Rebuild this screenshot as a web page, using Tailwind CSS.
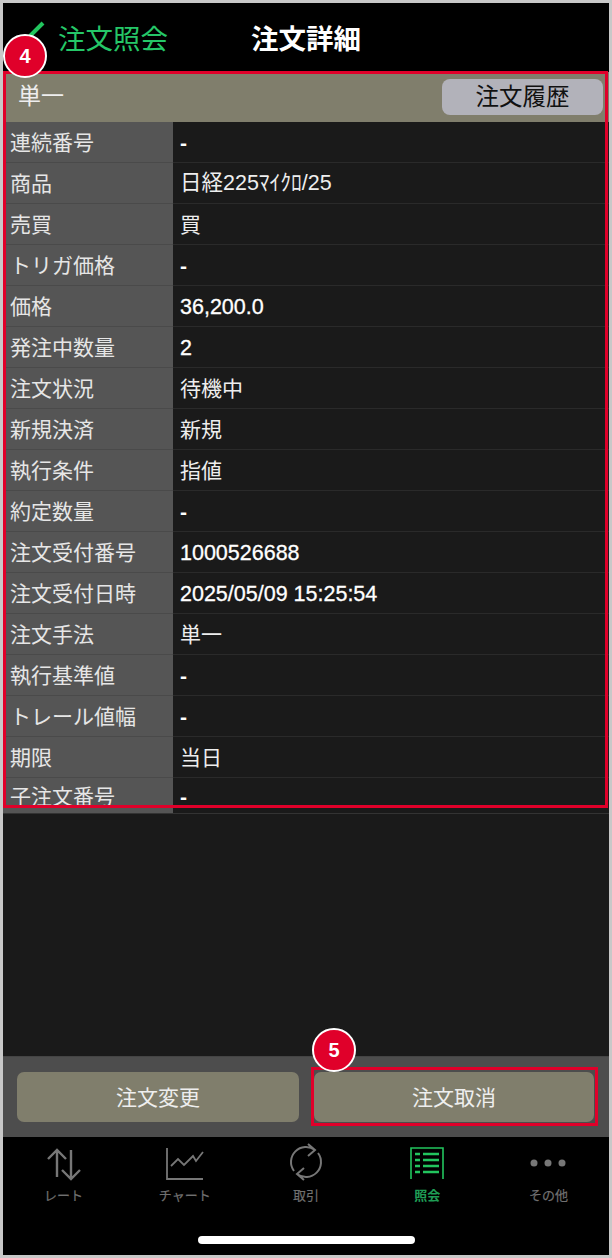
<!DOCTYPE html>
<html lang="ja">
<head>
  <meta charset="UTF-8" />
  <title>注文詳細</title>
  <script src="https://cdn.jsdelivr.net/npm/@tailwindcss/browser@4"></script>
</head>
<body class="bg-[#c8c8c8] [font-family:'Liberation_Sans','Noto_Sans_CJK_JP',sans-serif]">
  <div class="relative w-[612px] h-[1258px] pt-[3px] pl-[3px] pr-[3px] pb-[3px] overflow-hidden">
    <div class="flex flex-col h-full bg-[#1a1a1a]">

      <!-- Header -->
      <header class="relative flex h-[69px] shrink-0 bg-black">
        <svg class="absolute left-[24px] top-[18px]" width="20" height="16" viewBox="0 0 20 16"><path d="M3 15 L16 2" stroke="#22c55e" stroke-width="4" fill="none"/></svg>
        <span class="absolute left-[55px] top-[19px] text-[27.5px] leading-[36px] text-[#25c768]">注文照会</span>
        <span class="absolute left-[248px] top-[19px] text-[27.5px] leading-[36px] font-bold text-white">注文詳細</span>
      </header>

      <!-- Detail -->
      <section class="h-[742px] shrink-0 overflow-hidden border-b border-[#333]">
        <div class="flex items-center justify-between h-[50px] pl-[15px] pr-[6px] bg-[#807e6c]">
          <span class="mb-[1px] text-[23px] text-[#eee]">単一</span>
          <button class="w-[161px] h-[36px] rounded-[8px] bg-[#b2b2ba] text-[23.5px] leading-[36px] text-[#111]">注文履歴</button>
        </div>
        <dl class="grid grid-cols-[170px_1fr] auto-rows-[41px] text-[21px]">
          <dt class="flex items-center pl-[7px] pt-[1px] bg-[#555] text-[#e6e6e6] border-b border-[#4a4a4a]">連続番号</dt>
          <dd class="flex items-center pl-[7px] pt-[1px] text-white font-bold border-b border-[#2a2a2a]">-</dd>
          <dt class="flex items-center pl-[7px] pt-[1px] bg-[#555] text-[#e6e6e6] border-b border-[#4a4a4a]">商品</dt>
          <dd class="flex items-center pl-[7px] pt-[1px] text-[#eee] text-[21.5px] border-b border-[#2a2a2a]">日経225ﾏｲｸﾛ/25</dd>
          <dt class="flex items-center pl-[7px] pt-[1px] bg-[#555] text-[#e6e6e6] border-b border-[#4a4a4a]">売買</dt>
          <dd class="flex items-center pl-[7px] pt-[1px] text-[#eee] border-b border-[#2a2a2a]">買</dd>
          <dt class="flex items-center pl-[7px] pt-[1px] bg-[#555] text-[#e6e6e6] border-b border-[#4a4a4a]">トリガ価格</dt>
          <dd class="flex items-center pl-[7px] pt-[1px] text-white font-bold border-b border-[#2a2a2a]">-</dd>
          <dt class="flex items-center pl-[7px] pt-[1px] bg-[#555] text-[#e6e6e6] border-b border-[#4a4a4a]">価格</dt>
          <dd class="flex items-center pl-[7px] pt-[3px] text-white text-[21.5px] [-webkit-text-stroke:0.3px_white] border-b border-[#2a2a2a]">36,200.0</dd>
          <dt class="flex items-center pl-[7px] pt-[1px] bg-[#555] text-[#e6e6e6] border-b border-[#4a4a4a]">発注中数量</dt>
          <dd class="flex items-center pl-[7px] pt-[3px] text-white text-[21.5px] [-webkit-text-stroke:0.3px_white] border-b border-[#2a2a2a]">2</dd>
          <dt class="flex items-center pl-[7px] pt-[1px] bg-[#555] text-[#e6e6e6] border-b border-[#4a4a4a]">注文状況</dt>
          <dd class="flex items-center pl-[7px] pt-[1px] text-[#eee] border-b border-[#2a2a2a]">待機中</dd>
          <dt class="flex items-center pl-[7px] pt-[1px] bg-[#555] text-[#e6e6e6] border-b border-[#4a4a4a]">新規決済</dt>
          <dd class="flex items-center pl-[7px] pt-[1px] text-[#eee] border-b border-[#2a2a2a]">新規</dd>
          <dt class="flex items-center pl-[7px] pt-[1px] bg-[#555] text-[#e6e6e6] border-b border-[#4a4a4a]">執行条件</dt>
          <dd class="flex items-center pl-[7px] pt-[1px] text-[#eee] border-b border-[#2a2a2a]">指値</dd>
          <dt class="flex items-center pl-[7px] pt-[1px] bg-[#555] text-[#e6e6e6] border-b border-[#4a4a4a]">約定数量</dt>
          <dd class="flex items-center pl-[7px] pt-[1px] text-white font-bold border-b border-[#2a2a2a]">-</dd>
          <dt class="flex items-center pl-[7px] pt-[1px] bg-[#555] text-[#e6e6e6] border-b border-[#4a4a4a]">注文受付番号</dt>
          <dd class="flex items-center pl-[7px] pt-[3px] text-white text-[21.5px] [-webkit-text-stroke:0.3px_white] border-b border-[#2a2a2a]">1000526688</dd>
          <dt class="flex items-center pl-[7px] pt-[1px] bg-[#555] text-[#e6e6e6] border-b border-[#4a4a4a]">注文受付日時</dt>
          <dd class="flex items-center pl-[7px] pt-[3px] text-white text-[21.5px] [-webkit-text-stroke:0.3px_white] border-b border-[#2a2a2a]">2025/05/09 15:25:54</dd>
          <dt class="flex items-center pl-[7px] pt-[1px] bg-[#555] text-[#e6e6e6] border-b border-[#4a4a4a]">注文手法</dt>
          <dd class="flex items-center pl-[7px] pt-[1px] text-[#eee] border-b border-[#2a2a2a]">単一</dd>
          <dt class="flex items-center pl-[7px] pt-[1px] bg-[#555] text-[#e6e6e6] border-b border-[#4a4a4a]">執行基準値</dt>
          <dd class="flex items-center pl-[7px] pt-[1px] text-white font-bold border-b border-[#2a2a2a]">-</dd>
          <dt class="flex items-center pl-[7px] pt-[1px] bg-[#555] text-[#e6e6e6] border-b border-[#4a4a4a]">トレール値幅</dt>
          <dd class="flex items-center pl-[7px] pt-[1px] text-white font-bold border-b border-[#2a2a2a]">-</dd>
          <dt class="flex items-center pl-[7px] pt-[1px] bg-[#555] text-[#e6e6e6] border-b border-[#4a4a4a]">期限</dt>
          <dd class="flex items-center pl-[7px] pt-[1px] text-[#eee] border-b border-[#2a2a2a]">当日</dd>
          <dt class="flex items-center pl-[7px] pb-[3px] bg-[#555] text-[#e6e6e6] border-b border-[#4a4a4a]">子注文番号</dt>
          <dd class="flex items-center pl-[7px] pb-[3px] text-white font-bold border-b border-[#2a2a2a]">-</dd>
        </dl>
      </section>

      <div class="flex-1"></div>

      <!-- Action buttons -->
      <div class="flex h-[81px] shrink-0 gap-[15px] px-[14px] pt-[15px] bg-[#4d4d4d] border-t border-[#444]">
        <button class="w-[282px] h-[50px] pt-[1px] rounded-[7px] bg-[#807e6c] text-[21px] text-[#eee]">注文変更</button>
        <button class="w-[280px] h-[50px] pt-[1px] rounded-[7px] bg-[#807e6c] text-[21px] text-[#eee]">注文取消</button>
      </div>

      <!-- Tab bar -->
      <nav class="relative h-[118px] shrink-0 bg-black">
        <div class="grid grid-cols-5 pt-[10px] text-[13px] leading-[18px] text-[#707070] text-center [-webkit-text-stroke:0.2px_#707070]">
          <div class="flex flex-col items-center gap-[6px]">
            <svg width="36" height="34" viewBox="0 0 36 34" fill="none" stroke="#777" stroke-width="2.4"><path d="M11 30V3M2 12l9-9 9 9M25 3v29M16 23l9 9 9-9"/></svg>
            <span>レート</span>
          </div>
          <div class="flex flex-col items-center gap-[6px]">
            <svg width="40" height="34" viewBox="0 0 40 34" fill="none" stroke="#777" stroke-width="1.8"><path d="M2 1v31h36M6 19l7-7 6 6 9-9 3 5 7-9"/></svg>
            <span>チャート</span>
          </div>
          <div class="flex flex-col items-center gap-[6px]">
            <svg width="34" height="38" viewBox="0 0 34 38" fill="none" stroke="#777" stroke-width="2" class="-mt-[4px]"><path d="M26 7A15 15 0 0 0 5 28M8 31A15 15 0 0 0 29 10M19 1l7 6-7 6M15 37l-7-6 7-6"/></svg>
            <span>取引</span>
          </div>
          <div class="flex flex-col items-center gap-[6px] text-[#1f9d55] font-bold [-webkit-text-stroke:0]">
            <svg width="34" height="34" viewBox="0 0 34 34" fill="none" stroke="#22c55e"><path stroke-width="1.6" d="M1 32V1h32v31"/><path stroke-width="2.4" d="M5 7h5M13 7h16M5 13h5M13 13h16M5 19h5M13 19h16M5 25h5M13 25h16"/></svg>
            <span>照会</span>
          </div>
          <div class="flex flex-col items-center gap-[6px]">
            <svg width="36" height="34" viewBox="0 0 36 34" fill="#777"><circle cx="4" cy="16" r="3.5"/><circle cx="18" cy="16" r="3.5"/><circle cx="32" cy="16" r="3.5"/></svg>
            <span>その他</span>
          </div>
        </div>
        <div class="absolute left-[195px] bottom-[11px] w-[217px] h-[8px] rounded-full bg-white"></div>
      </nav>
    </div>

    <!-- Annotations -->
    <div class="absolute left-[3px] top-[71px] w-[605px] h-[737px] border-[3px] border-[#e0002a]"></div>
    <div class="absolute left-[311px] top-[1067px] w-[287px] h-[59px] border-[3px] border-[#e0002a]"></div>
    <div class="absolute left-[3px] top-[34px] flex items-center justify-center w-[44px] h-[44px] rounded-full border-2 border-white bg-[#e0002a] text-[20px] font-bold text-white">4</div>
    <div class="absolute left-[312px] top-[1028px] flex items-center justify-center w-[44px] h-[44px] rounded-full border-2 border-white bg-[#e0002a] text-[20px] font-bold text-white">5</div>
  </div>
</body>
</html>
